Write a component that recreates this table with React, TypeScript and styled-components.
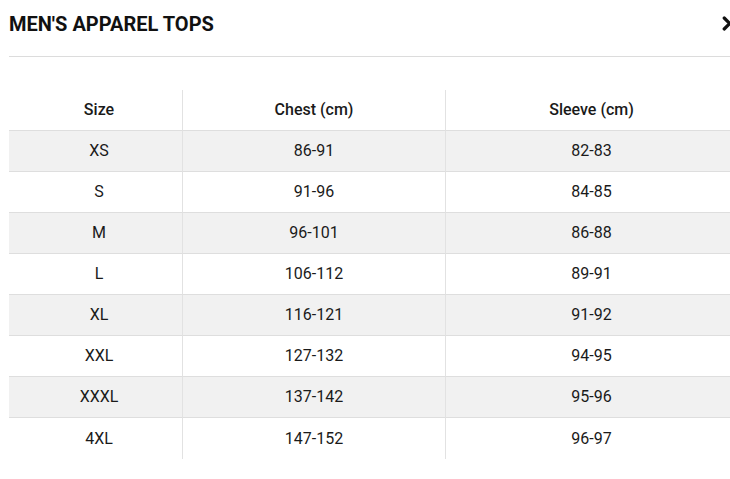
import React from "react";
import styled, { createGlobalStyle } from "styled-components";

const Global = createGlobalStyle`
  html, body { margin: 0; padding: 0; background: #fff; overflow: hidden; }
  body { font-family: Roboto, "Noto Sans", Arial, sans-serif; color: #111; }
`;

const Page = styled.div`
  width: 730px;
  height: 479px;
  overflow: hidden;
  padding-left: 9px;
  box-sizing: border-box;
`;

const Inner = styled.div`
  width: 728px;
`;

const Header = styled.div`
  display: flex;
  align-items: center;
  justify-content: space-between;
  height: 57px;
  border-bottom: 1px solid #dcdcdc;
  box-sizing: border-box;
  padding-right: 7px;
`;

const Title = styled.h2`
  margin: 0;
  padding-bottom: 8px;
  font-size: 20px;
  line-height: 24px;
  font-weight: 700;
  color: #111;
  letter-spacing: 0;
`;

const Chevron = styled.svg`
  width: 10px;
  height: 16px;
  margin-bottom: 8px;
  margin-right: -2px;
`;

const Table = styled.div`
  margin-top: 33px;
  display: grid;
  grid-template-columns: 174px 263px 291px;
`;

const Row = styled.div<{ $shade?: boolean; $last?: boolean; $head?: boolean }>`
  display: contents;
  & > div {
    background: ${(p) => (p.$shade ? "#f1f1f1" : "#fff")};
    border-bottom: ${(p) => (p.$last ? "none" : "1px solid #dedede")};
    font-weight: ${(p) => (p.$head ? 500 : 400)};
  }
`;

const Cell = styled.div<{ $first?: boolean; $lastCol?: boolean }>`
  height: 41px;
  box-sizing: border-box;
  display: flex;
  align-items: center;
  justify-content: center;
  padding-bottom: 1px;
  font-size: 16px;
  color: #1a1a1a;
  padding-left: ${(p) => (p.$first ? "7px" : "0")};
  border-right: ${(p) => (p.$lastCol ? "none" : "1px solid #e2e2e2")};
`;

const headers = ["Size", "Chest (cm)", "Sleeve (cm)"];
const rows = [
  ["XS", "86-91", "82-83"],
  ["S", "91-96", "84-85"],
  ["M", "96-101", "86-88"],
  ["L", "106-112", "89-91"],
  ["XL", "116-121", "91-92"],
  ["XXL", "127-132", "94-95"],
  ["XXXL", "137-142", "95-96"],
  ["4XL", "147-152", "96-97"],
];

export default function App() {
  return (
    <>
      <Global />
      <Page>
        <Inner>
          <Header>
            <Title>MEN'S APPAREL TOPS</Title>
            <Chevron viewBox="0 0 10 16">
              <path d="M2.2 2 L7.8 7.5 L2.2 13" fill="none" stroke="#111" strokeWidth="3.2" strokeLinecap="round" strokeLinejoin="round" />
            </Chevron>
          </Header>
          <Table>
            <Row $head>
              {headers.map((h, i) => (
                <Cell key={h} $first={i === 0} $lastCol={i === 2}>{h}</Cell>
              ))}
            </Row>
            {rows.map((r, ri) => (
              <Row key={r[0]} $shade={ri % 2 === 0} $last={ri === rows.length - 1}>
                {r.map((c, i) => (
                  <Cell key={i} $first={i === 0} $lastCol={i === 2}>{c}</Cell>
                ))}
              </Row>
            ))}
          </Table>
        </Inner>
      </Page>
    </>
  );
}
